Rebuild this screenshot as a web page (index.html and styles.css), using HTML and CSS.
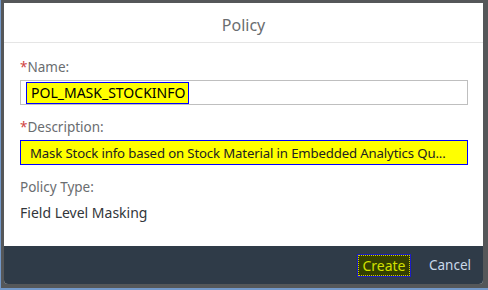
FILE: index.html
```html
<!DOCTYPE html>
<html>
<head>
<meta charset="utf-8">
<link rel="stylesheet" href="styles.css">
</head>
<body>
<div class="frame">
  <div class="dialog">
    <header class="header">Policy</header>
    <section class="content">
      <label class="label"><span class="req">*</span>Name:</label>
      <div class="input">
        <span class="sel">POL_MASK_STOCKINFO</span>
      </div>
      <label class="label gap"><span class="req">*</span>Description:</label>
      <div class="input hl">Mask Stock info based on Stock Material in Embedded Analytics Qu...</div>
      <label class="label gap2">Policy Type:</label>
      <div class="value">Field Level Masking</div>
    </section>
    <footer class="footer">
      <button class="btn create"><span>Create</span></button>
      <button class="btn cancel">Cancel</button>
    </footer>
  </div>
</div>
</body>
</html>
```

FILE: styles.css
```css
html, body {
  margin: 0;
  padding: 0;
}
body {
  width: 488px;
  height: 290px;
  background: #7398c9;
  font-family: "Noto Sans", "Open Sans", sans-serif;
  overflow: hidden;
}
.frame {
  margin-left: 1px;
  width: 482px;
  height: 284px;
  padding: 3px 3px 1px 3px;
  background: #555759;
}
.dialog {
  width: 479px;
  height: 281px;
  background: #fff;
  display: flex;
  flex-direction: column;
  border-radius: 0 0 4px 4px;
  overflow: hidden;
}
.header {
  height: 40px;
  box-sizing: border-box;
  padding-top: 4px;
  border-bottom: 1px solid #e5e5e5;
  display: flex;
  align-items: center;
  justify-content: center;
  font-size: 16px;
  color: #6a6d70;
  flex: none;
}
.content {
  flex: 1;
  padding: 15px 15px 0 16px;
  display: flex;
  flex-direction: column;
}
.label {
  font-size: 13.5px;
  line-height: 18px;
  color: #6a6d70;
}
.req {
  color: #d04343;
}
.gap { margin-top: 13px; }
.gap2 { margin-top: 13px; }
.input {
  margin-top: 4px;
  height: 25px;
  box-sizing: border-box;
  border: 1px solid #bfbfbf;
  display: flex;
  align-items: center;
  padding-left: 5px;
  font-size: 14px;
  color: #000;
}
.sel {
  background: #ffff00;
  border: 1px solid #0000ff;
  padding: 0 3px 0 4px;
  line-height: 20px;
  height: 20px;
}
.input.hl {
  background: #ffff00;
  border: 1px solid #0000ff;
  padding-left: 9px;
  font-size: 13.2px;
  letter-spacing: -0.14px;
  color: #222;
  white-space: nowrap;
  overflow: hidden;
}
.value {
  margin-top: 8px;
  font-size: 14px;
  line-height: 18px;
  color: #32363a;
}
.footer {
  flex: none;
  height: 38px;
  background: #2f3b48;
  display: flex;
  align-items: center;
  justify-content: flex-end;
  padding-right: 12px;
  gap: 18px;
}
.btn {
  font-family: inherit;
  font-size: 14px;
  border: none;
  background: none;
  padding: 0;
  cursor: pointer;
}
.create {
  height: 23px;
  width: 54px;
  border: 1px solid #1c1cc8;
  background: #343f00;
  color: #d2e000;
  display: flex;
  align-items: center;
  justify-content: center;
  padding: 0;
}
.create span {
  box-sizing: border-box;
  width: 52px;
  height: 21px;
  display: flex;
  align-items: center;
  justify-content: center;
  border: 1px dotted #d0d000;
}
.cancel {
  color: #c9d9ea;
  font-size: 13.5px;
}
```
